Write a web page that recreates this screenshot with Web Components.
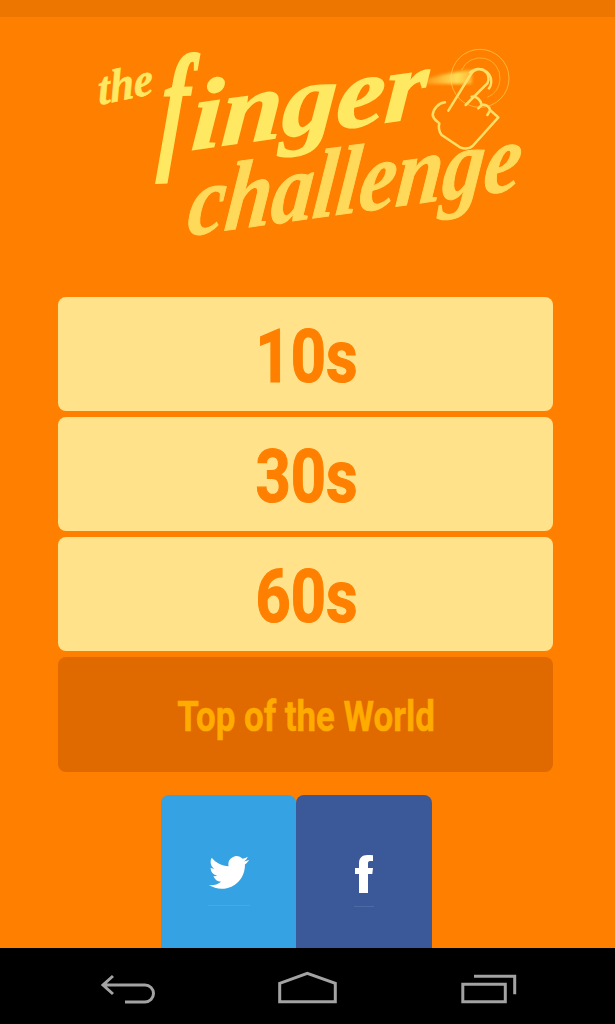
<!DOCTYPE html>
<html><head><meta charset="utf-8"><style>
html,body{margin:0;padding:0;background:#ff8000}
body{width:615px;height:1024px;overflow:hidden;font-family:Roboto,"Liberation Sans",sans-serif}
fc-app{height:1024px}
</style></head><body>
<fc-app>
<fc-logo></fc-logo>
<fc-button>10s</fc-button>
<fc-button>30s</fc-button>
<fc-button>60s</fc-button>
<fc-button variant="dark">Top of the World</fc-button>
<fc-social></fc-social>
</fc-app>
<script>
function def(name,html){customElements.define(name,class extends HTMLElement{
  constructor(){super();this.attachShadow({mode:'open'}).innerHTML=html;}
});}
def('fc-app',`<style>
:host{display:flex;flex-direction:column;width:615px;background:#ff8000}
.status{height:17px;background:#ec7600;flex:none}
main{flex:1;min-height:0;overflow:hidden;display:flex;flex-direction:column}
nav{height:76px;flex:none;background:#000;display:block}
svg{display:block}
</style>
<div class="status"></div>
<main><slot></slot></main>
<nav><svg width="615" height="76" viewBox="0 948 615 76" fill="none" stroke="#a3a3a3" stroke-width="3">
<path d="M113 976L103 985L113 994M103 985H145A8.500 8.500 0 0 1 145 1002H125"/>
<path d="M279.700 983.300L307.300 973.300L335.300 983.300V1001.700H279.700Z"/>
<path d="M462.800 984.300H505.300V1001.700H462.800ZM474 976.300H514.700V994.300"/>
</svg></nav>`);
def('fc-logo',`<style>
:host{display:block;height:280px;flex:none}
svg{display:block}
text{font-family:"Liberation Serif",serif;font-style:italic;font-weight:700}
</style>
<svg width="615" height="280" viewBox="0 17 615 280">
<defs><linearGradient id="st" x1="0" x2="1" y1="0" y2="0"><stop offset="0" stop-color="#ffe35c" stop-opacity="0"/><stop offset=".75" stop-color="#ffe35c" stop-opacity=".95"/><stop offset="1" stop-color="#ffe35c" stop-opacity=".5"/></linearGradient>
<filter id="bl"><feGaussianBlur stdDeviation="1.5"/></filter></defs>
<text transform="translate(99 105) rotate(-12) skewX(-8)" font-size="46" textLength="56" lengthAdjust="spacingAndGlyphs" fill="#ffe963" stroke="#ffe963" stroke-width=".6">the</text>
<text transform="translate(158 153) rotate(-2) skewX(-6) scale(.6 1)" font-size="140" fill="#ffe963" stroke="#ffe963" stroke-width="2">f</text>
<text transform="translate(190 150) rotate(-8) skewX(-12)" font-size="98" textLength="238" lengthAdjust="spacingAndGlyphs" fill="#ffe963" stroke="#ffe963" stroke-width="1.5">inger</text>
<text transform="translate(186 236) rotate(-8) skewX(-14)" font-size="96" textLength="336" lengthAdjust="spacingAndGlyphs" fill="#ffd95a" stroke="#ffd95a" stroke-width="1">challenge</text>
<path d="M414 84C432 76 452 72 472 70V84C452 84 432 84 414 84Z" fill="url(#st)" filter="url(#bl)"/>
<g fill="none" stroke="#ffdf66" transform="translate(400 40) scale(.3333)">
<circle cx="240" cy="115" r="87" stroke-width="3" opacity=".55"/>
<path d="M185 90A60 60 0 0 1 300 118" stroke-width="3" opacity=".45"/>
<path d="M300 118A60 60 0 0 1 262 172" stroke-width="3" opacity=".45"/>
<path d="M208 100A37 37 0 1 1 265 148" stroke-width="7"/>
<path stroke-width="7.500" stroke-linecap="round" stroke-linejoin="round" d="M145 212L213 102A24 24 0 0 1 262 130L197 195M135 187C115 190 100 205 98 225C100 240 115 245 118 250C115 260 118 275 125 285L180 322C195 328 210 325 218 318L295 232L270 210C268 198 255 192 245 195C243 180 230 168 215 170M235 205L245 195M262 225L270 212"/>
</g>
</svg>`);
def('fc-button',`<style>
:host{display:flex;align-items:center;justify-content:center;flex:none;box-sizing:border-box;height:114px;margin:0 62px 6px 58px;border-radius:8px;background:#ffe28a;color:#ff8000;font:700 74px/1 Roboto,"Liberation Sans",sans-serif;overflow:hidden}
:host([variant=dark]){height:115px;background:#e06900;color:#ffab00;font-size:42px;margin-bottom:0}
span{display:inline-block;white-space:nowrap;transform:translate(1px,3px) scaleX(.83);-webkit-text-stroke:1.2px currentColor}
:host([variant=dark]) span{-webkit-text-stroke:.5px currentColor;transform:translate(1px,2px) scaleX(.83)}
</style><span><slot></slot></span>`);
def('fc-social',`<style>
:host{display:flex;flex:none;height:156px;margin-top:23px;padding-left:161px}
.b{box-sizing:border-box;height:156px;border-radius:8px 8px 0 0;display:flex;flex-direction:column;align-items:center;padding-top:60px;flex:none}
.t{width:135px;background:#35a3e3}.f{width:136px;background:#3b5998}
svg{display:block;fill:#fff}
i{display:block;height:1px}
.t i{width:42px;background:#4aa9e0;margin-top:15px}.f i{width:20px;background:#4d6aa5;margin-top:13px}
</style>
<div class="b t"><svg width="40" height="35" viewBox="0 1.5 24 21"><path d="M23.953 4.57a10 10 0 01-2.825.775 4.958 4.958 0 002.163-2.723c-.951.555-2.005.959-3.127 1.184a4.92 4.92 0 00-8.384 4.482C7.69 8.095 4.067 6.13 1.64 3.162a4.822 4.822 0 00-.666 2.475c0 1.71.87 3.213 2.188 4.096a4.904 4.904 0 01-2.228-.616v.06a4.923 4.923 0 003.946 4.827 4.996 4.996 0 01-2.212.085 4.936 4.936 0 004.604 3.417 9.867 9.867 0 01-6.102 2.105c-.39 0-.779-.023-1.17-.067a13.995 13.995 0 007.557 2.209c9.053 0 13.998-7.496 13.998-13.985 0-.21 0-.42-.015-.63A9.935 9.935 0 0024 4.59z"/></svg><i></i></div>
<div class="b f"><svg width="18" height="38" viewBox="0 0 18 38"><path d="M4 38V19H0V13H4V8.500C4 3 7 0 12.500 0C14.500 0 16.500 .1 18 .3V6H15C13.500 6 13 7 13 8.500V13H18L17.300 19H13V38Z"/></svg><i></i></div>`);
</script>
</body></html>
